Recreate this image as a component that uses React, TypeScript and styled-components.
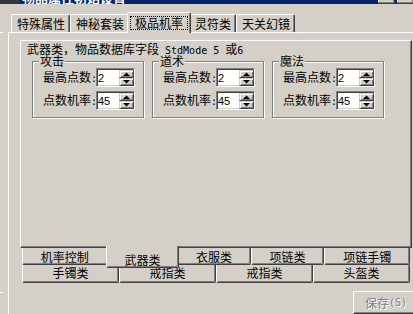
import styled, { createGlobalStyle } from "styled-components";

const FACE = "#d4d0c8";
const LIGHT = "#ffffff";
const SHADOW = "#808080";
const DARK = "#404040";

const GlobalStyle = createGlobalStyle`
  html, body {
    margin: 0;
    padding: 0;
    background: ${FACE};
    overflow: hidden;
  }

  body {
    font-family: "Noto Sans CJK SC", sans-serif;
    font-size: 12px;
    color: #000;
  }
`;

interface TabItem {
  label: string;
  selected?: boolean;
}

const topTabs: TabItem[] = [
  { label: "特殊属性" },
  { label: "神秘套装" },
  { label: "极品机率", selected: true },
  { label: "灵符类" },
  { label: "天关幻镜" },
];

const nearRow: TabItem[] = [
  { label: "机率控制" },
  { label: "武器类", selected: true },
  { label: "衣服类" },
  { label: "项链类" },
  { label: "项链手镯" },
];

const farRow = ["手镯类", "戒指类", "戒指类", "头盔类"];

const groups = [
  { title: "攻击", max: "2", rate: "45" },
  { title: "道术", max: "2", rate: "45" },
  { title: "魔法", max: "2", rate: "45" },
];

const SpinEdit = ({ value }: { value: string }) => (
  <Spin>
    <SpinValue>{value}</SpinValue>
    <SpinButtons>
      <SpinButton>
        <svg width="7" height="4" viewBox="0 0 7 4">
          <polygon points="0,4 7,4 3.5,0.5" fill="#000" />
        </svg>
      </SpinButton>
      <SpinButton>
        <svg width="7" height="4" viewBox="0 0 7 4">
          <polygon points="0,0 7,0 3.5,3.5" fill="#000" />
        </svg>
      </SpinButton>
    </SpinButtons>
  </Spin>
);

export default function App() {
  return (
    <>
      <GlobalStyle />
      <Window>
        <TitleBar>
          <TitleIcon />
          <TitleText>物品属性初始设置</TitleText>
          <CaptionButtons>
            <CaptionButton />
            <CaptionButton />
          </CaptionButtons>
        </TitleBar>
        <Body>
          <LeftStrip>
            <StubLine $gap={28} />
            <StubLine $gap={259} />
          </LeftStrip>
          <OuterTabs>
            <TopTabRow>
              {topTabs.map((tab) => (
                <TopTab key={tab.label} $selected={tab.selected}>
                  {tab.selected ? <FocusLabel>{tab.label}</FocusLabel> : tab.label}
                </TopTab>
              ))}
            </TopTabRow>
            <OuterSheet>
              <InnerTabs>
                <InnerSheet>
                  <Caption>
                    武器类，物品数据库字段<Mono> StdMode 5 </Mono>或<Mono>6</Mono>
                  </Caption>
                  <GroupRow>
                    {groups.map((group) => (
                      <GroupBox key={group.title}>
                        <GroupTitle>{group.title}</GroupTitle>
                        <Fields>
                          <Field>
                            <FieldLabel>
                              最高点数<Mono>:</Mono>
                            </FieldLabel>
                            <SpinEdit value={group.max} />
                          </Field>
                          <Field>
                            <FieldLabel>
                              点数机率<Mono>:</Mono>
                            </FieldLabel>
                            <SpinEdit value={group.rate} />
                          </Field>
                        </Fields>
                      </GroupBox>
                    ))}
                  </GroupRow>
                </InnerSheet>
                <TabRows>
                  <TabRow>
                    {nearRow.map((tab) => (
                      <BottomTab key={tab.label} $selected={tab.selected}>
                        {tab.label}
                      </BottomTab>
                    ))}
                  </TabRow>
                  <TabRow $far>
                    {farRow.map((label, i) => (
                      <BottomTab key={i} $far>
                        {label}
                      </BottomTab>
                    ))}
                  </TabRow>
                </TabRows>
              </InnerTabs>
              <Footer>
                <SaveButton disabled>
                  保存<Mono>(S)</Mono>
                </SaveButton>
              </Footer>
            </OuterSheet>
          </OuterTabs>
        </Body>
      </Window>
    </>
  );
}

const Window = styled.div`
  display: flex;
  flex-direction: column;
  width: 413px;
  height: 314px;
  overflow: hidden;
  background: ${FACE};
`;

const TitleBar = styled.header`
  display: flex;
  align-items: flex-end;
  flex-shrink: 0;
  height: 4px;
  overflow: hidden;
  background: #0a246a;
`;

const TitleIcon = styled.div`
  width: 20px;
  height: 4px;
  flex-shrink: 0;
  background: #33363f;
`;

const TitleText = styled.span`
  flex-shrink: 0;
  margin-left: 2px;
  color: #fff;
  font-size: 13px;
  font-weight: bold;
  line-height: 13px;
  white-space: nowrap;
`;

const CaptionButtons = styled.div`
  display: flex;
  gap: 2px;
  flex-shrink: 0;
  margin-left: auto;
  margin-right: -1px;
  height: 4px;
`;

const CaptionButton = styled.div`
  width: 16px;
  height: 3px;
  background: ${FACE};
  border-right: 1px solid ${DARK};
  border-bottom: 1px solid ${DARK};
  box-shadow: inset -1px -1px 0 ${SHADOW}, inset 1px 0 0 ${LIGHT};
`;

const Body = styled.div`
  display: flex;
  flex: 1;
  min-height: 0;
`;

const LeftStrip = styled.div`
  display: flex;
  flex-direction: column;
  flex-shrink: 0;
  width: 8px;
`;

const StubLine = styled.div<{ $gap: number }>`
  width: 3px;
  height: 1px;
  margin-top: ${(p) => p.$gap}px;
  background: ${LIGHT};
`;

const OuterTabs = styled.div`
  display: flex;
  flex-direction: column;
  flex-shrink: 0;
  width: 424px;
`;

const TopTabRow = styled.div`
  display: flex;
  align-items: flex-end;
  height: 29px;
  padding-left: 3px;
`;

const TopTab = styled.div<{ $selected?: boolean }>`
  position: relative;
  z-index: ${(p) => (p.$selected ? 1 : 0)};
  box-sizing: border-box;
  height: ${(p) => (p.$selected ? 21 : 18)}px;
  margin: ${(p) => (p.$selected ? "0 -2px -1px" : "0")};
  padding: ${(p) => (p.$selected ? "3px 2px 0" : "3px 4px 0 5px")};

  background: ${FACE};
  border: 1px solid;
  border-bottom: none;
  border-color: ${LIGHT} ${DARK} ${LIGHT} ${LIGHT};
  border-radius: 2px 2px 0 0;
  box-shadow: inset -1px 0 0 ${SHADOW};

  line-height: 12px;
  white-space: nowrap;
`;

const FocusLabel = styled.span`
  display: block;
  padding: 0 4px;
  border: 1px dotted #000;
  line-height: 12px;
`;

const OuterSheet = styled.div`
  display: flex;
  flex-direction: column;
  flex: 1;
  padding: 7px 3px 0 11px;
  border-top: 1px solid ${LIGHT};
  border-left: 1px solid ${LIGHT};
  border-right: 1px solid ${DARK};
`;

const InnerTabs = styled.div`
  display: flex;
  flex-direction: column;
  width: 392px;
`;

const InnerSheet = styled.div`
  box-sizing: border-box;
  height: 208px;
  padding: 2px 0 0 6px;
  border: 1px solid;
  border-color: ${LIGHT} ${DARK} ${DARK} ${LIGHT};
  box-shadow: inset -1px -1px 0 ${SHADOW};
`;

const Caption = styled.div`
  height: 12px;
  line-height: 12px;
  white-space: nowrap;
`;

const Mono = styled.span`
  font-family: "DejaVu Sans Mono", monospace;
  font-size: 10px;
  line-height: 12px;
`;

const GroupRow = styled.div`
  display: flex;
  gap: 8px;
  margin: 6px 0 0 5px;
`;

const GroupBox = styled.div`
  display: flex;
  flex-direction: column;
  box-sizing: border-box;
  width: 112px;
  padding: 0 0 7px 10px;
  border: 1px solid ${SHADOW};
  box-shadow: inset 1px 1px 0 ${LIGHT}, 1px 1px 0 ${LIGHT};
`;

const GroupTitle = styled.div`
  align-self: flex-start;
  margin: -7px 0 0 -4px;
  padding: 0 1px;
  background: ${FACE};
  line-height: 12px;
  white-space: nowrap;
`;

const Fields = styled.div`
  display: flex;
  flex-direction: column;
  gap: 4px;
  margin-top: 1px;
`;

const Field = styled.div`
  display: flex;
  align-items: center;
  height: 19px;
`;

const FieldLabel = styled.span`
  flex-shrink: 0;
  width: 53px;
  line-height: 12px;
  white-space: nowrap;
`;

const Spin = styled.div`
  display: flex;
  box-sizing: border-box;
  width: 39px;
  height: 19px;
  padding: 1px 0 0 1px;
  background: #fff;
  border: 1px solid;
  border-color: ${SHADOW} ${LIGHT} ${LIGHT} ${SHADOW};
  box-shadow: inset 1px 1px 0 ${DARK}, inset -1px -1px 0 ${FACE};
`;

const SpinValue = styled.span`
  flex: 1;
  font-family: "Liberation Sans", sans-serif;
  font-size: 11px;
  line-height: 16px;
`;

const SpinButtons = styled.div`
  display: flex;
  flex-direction: column;
  width: 15px;
`;

const SpinButton = styled.div`
  display: flex;
  align-items: center;
  justify-content: center;
  flex: 1;
  box-sizing: border-box;
  background: ${FACE};
  border: 1px solid;
  border-color: ${FACE} ${DARK} ${DARK} ${FACE};
  box-shadow: inset 1px 1px 0 ${LIGHT}, inset -1px -1px 0 ${SHADOW};

  svg {
    display: block;
  }
`;

const TabRows = styled.div`
  display: flex;
  flex-direction: column;
  padding: 0 2px;
`;

const TabRow = styled.div<{ $far?: boolean }>`
  display: flex;
  align-items: flex-start;
  height: ${(p) => (p.$far ? 18 : 17)}px;
`;

const BottomTab = styled.div<{ $selected?: boolean; $far?: boolean }>`
  position: relative;
  z-index: ${(p) => (p.$selected ? 2 : 0)};
  flex: 1 1 auto;
  box-sizing: border-box;
  height: ${(p) => (p.$selected ? 22 : p.$far ? 18 : 17)}px;
  margin: ${(p) => (p.$selected ? "-2px -2px 0" : "0")};
  padding-top: ${(p) => (p.$selected ? 8 : p.$far ? 2 : 3)}px;

  background: ${FACE};
  border-left: 1px solid ${LIGHT};
  border-right: 1px solid ${DARK};
  border-bottom: 1px solid ${DARK};
  border-radius: 0 0 2px 2px;
  box-shadow: inset -1px -1px 0 ${SHADOW};

  line-height: 12px;
  text-align: center;
  white-space: nowrap;
`;

const Footer = styled.div`
  display: flex;
  justify-content: flex-end;
  margin-top: 8px;
`;

const SaveButton = styled.button`
  display: flex;
  align-items: flex-start;
  box-sizing: border-box;
  width: 75px;
  height: 23px;
  padding: 5px 0 0 11px;

  background: ${FACE};
  border: 1px solid;
  border-color: ${LIGHT} ${DARK} ${DARK} ${LIGHT};
  box-shadow: inset -1px -1px 0 ${SHADOW};

  color: ${SHADOW};
  font-family: inherit;
  font-size: 12px;
  line-height: 12px;
  text-shadow: 1px 1px 0 ${LIGHT};
  white-space: nowrap;
`;
